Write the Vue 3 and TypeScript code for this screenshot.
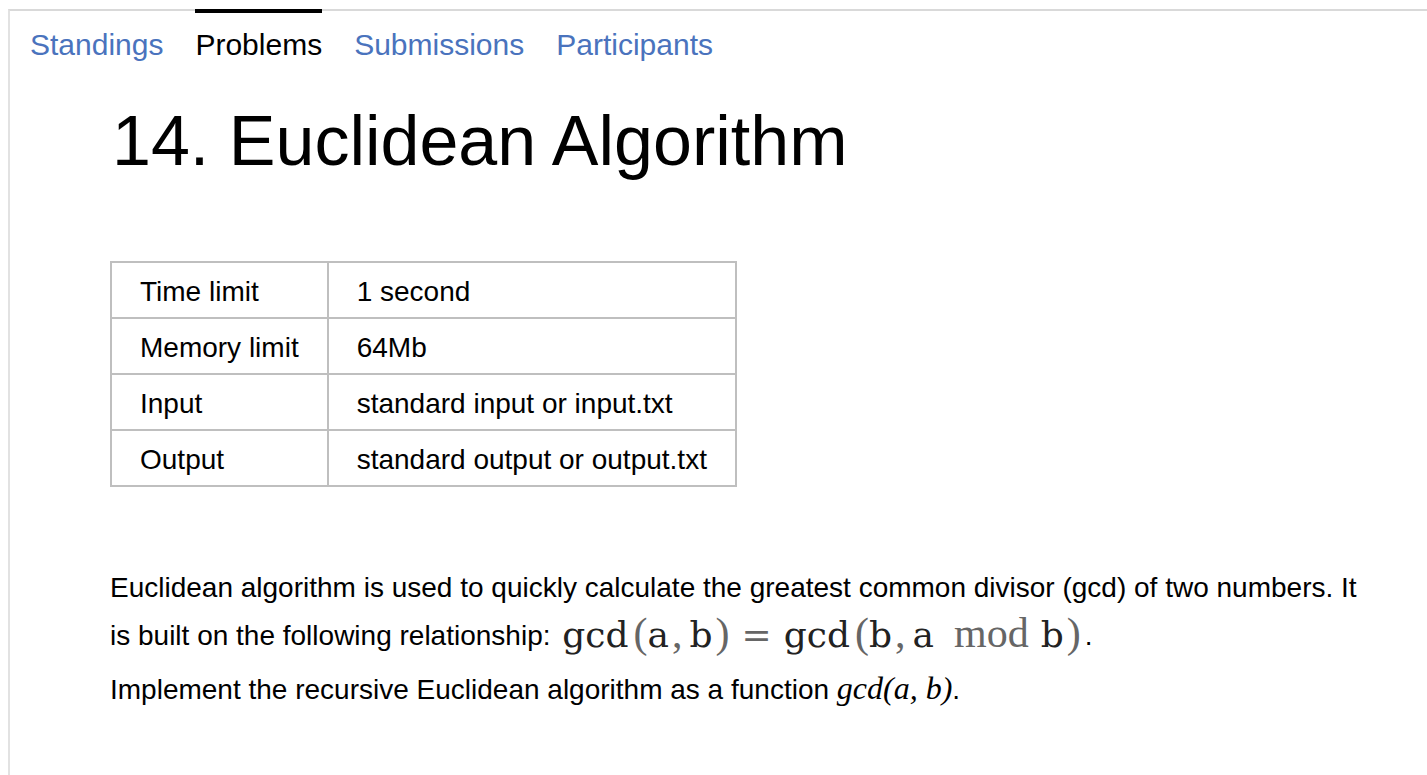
<script setup lang="ts">
interface Tab {
  label: string
  active: boolean
}

const tabs: Tab[] = [
  { label: 'Standings', active: false },
  { label: 'Problems', active: true },
  { label: 'Submissions', active: false },
  { label: 'Participants', active: false },
]

const limits: [string, string][] = [
  ['Time limit', '1 second'],
  ['Memory limit', '64Mb'],
  ['Input', 'standard input or input.txt'],
  ['Output', 'standard output or output.txt'],
]
</script>

<template>
  <div class="page">
    <nav class="tabs">
      <a
        v-for="tab in tabs"
        :key="tab.label"
        href="#"
        :class="['tab', { active: tab.active }]"
        :aria-current="tab.active ? 'page' : undefined"
      >{{ tab.label }}</a>
    </nav>
    <main class="problem">
      <h1>14. Euclidean Algorithm</h1>
      <table class="limits">
        <tbody>
          <tr v-for="[name, value] in limits" :key="name">
            <th scope="row">{{ name }}</th>
            <td>{{ value }}</td>
          </tr>
        </tbody>
      </table>
      <div class="legend">
        <p>
          Euclidean algorithm is used to quickly calculate the greatest common divisor (gcd) of two numbers. It
          is built on the following relationship:
          <span class="formula"><b>gcd</b><span class="light open">(</span><b>a</b><span class="light comma">,</span><b>b</b><span class="light close">)</span><span class="equals">=</span><b>gcd</b><span class="light open">(</span><b>b</b><span class="light comma">,</span><b>a</b><span class="light mod">mod</span><b>b</b><span class="light close">)</span></span>.
        </p>
        <p>Implement the recursive Euclidean algorithm as a function <i class="math">gcd(a, b)</i>.</p>
      </div>
    </main>
  </div>
</template>

<style>
body {
  background: #fff;
}
</style>

<style scoped>
.page {
  box-sizing: border-box;
  min-height: calc(100vh - 9px);
  margin: 9px 0 0 8px;
  border-top: 2px solid #d9d9d9;
  border-left: 2px solid #e2e2e2;
  color: #000;
  font-family: "Liberation Sans", Arial, sans-serif;
  font-size: 28px;
}
.tabs {
  display: flex;
  gap: 32px;
  margin-top: -2px;
  padding-left: 20px;
}
.tab {
  padding-top: 16px;
  border-top: 4px solid transparent;
  color: #4a73bd;
  font-size: 30px;
  line-height: 32px;
  text-decoration: none;
}
.tab.active {
  border-top-color: #000;
  color: #000;
}
.problem {
  padding: 0 60px 0 100px;
}
h1 {
  margin: 36px 0 76px;
  padding-left: 2px;
  font-size: 70px;
  font-weight: 400;
  line-height: 88px;
}
.limits {
  border-collapse: collapse;
  line-height: 34px;
}
th,
td {
  padding: 12px 28px 8px;
  border: 2px solid #bfbfbf;
  font-weight: 400;
  text-align: left;
}
.legend {
  margin-top: 77px;
  line-height: 48px;
}
p {
  margin: 0 0 6px;
}
.formula {
  display: inline-flex;
  align-items: baseline;
  margin: 0 4px;
  color: #222;
  font-family: "DejaVu Serif", serif;
  font-size: 36px;
  line-height: 40px;
  vertical-align: -2px;
  white-space: nowrap;
}
.formula b {
  font-weight: 400;
}
.light {
  color: #666;
  font-family: "Liberation Serif", "Times New Roman", serif;
  font-size: 42px;
}
.open {
  margin-left: 5px;
}
.close {
  margin-left: 3px;
}
.comma {
  margin: 0 7px 0 3px;
}
.equals {
  margin: 0 12px;
  color: #666;
}
.mod {
  margin: 0 12px 0 20px;
}
.math {
  font-family: "Liberation Serif", "Times New Roman", serif;
  font-size: 32px;
  line-height: 40px;
}
</style>
